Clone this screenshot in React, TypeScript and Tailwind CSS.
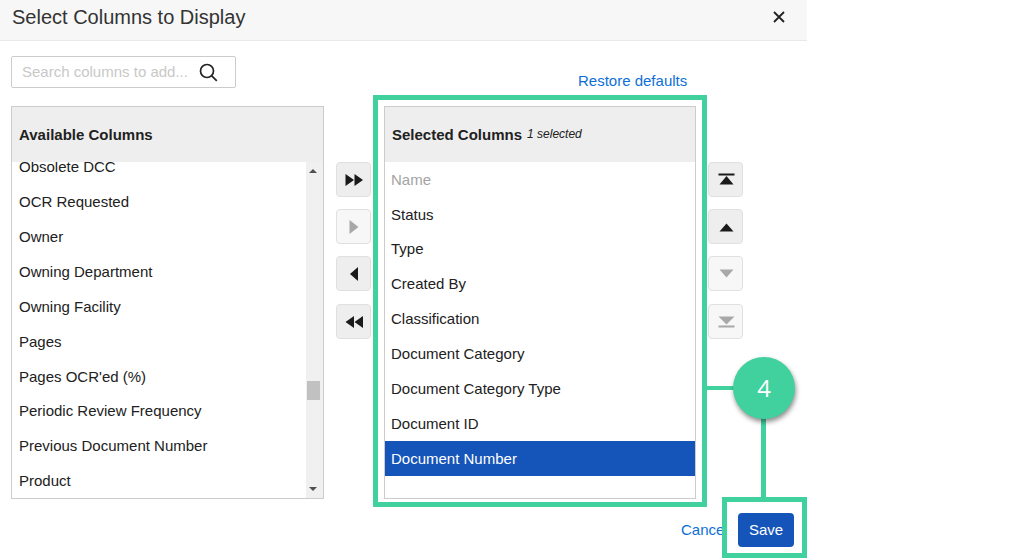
import React from 'react';

const available = [
  'Obsolete DCC',
  'OCR Requested',
  'Owner',
  'Owning Department',
  'Owning Facility',
  'Pages',
  "Pages OCR'ed (%)",
  'Periodic Review Frequency',
  'Previous Document Number',
  'Product',
];

const selected = [
  'Name',
  'Status',
  'Type',
  'Created By',
  'Classification',
  'Document Category',
  'Document Category Type',
  'Document ID',
  'Document Number',
];

const icons: Record<string, React.ReactNode> = {
  allRight: <path d="M0.500 1l8.500 6-8.500 6zM9.500 1l8.500 6-8.500 6z" />,
  right: <path d="M4.500 0l9 7-9 7z" />,
  left: <path d="M13 0L5 7l8 7z" />,
  allLeft: <path d="M9 1L0.500 7 9 13zM18 1L9.500 7l8.500 6z" />,
  top: <path d="M1.500 0.500h16v2h-16zM9.500 3l7 8.500h-14z" />,
  up: <path d="M9.500 3.500l7 8h-14z" />,
  down: <path d="M2.500 2.500h14l-7 8z" />,
  bottom: <path d="M1.500 1.500h16l-8 8zM1.500 10.500h16v2h-16z" />,
};

const MoveButton = ({ icon, disabled, className = '' }: { icon: string; disabled?: boolean; className?: string }) => (
  <button
    className={`flex h-[35px] w-[35px] items-center justify-center rounded border border-[#e0e0e0] ${
      disabled ? 'bg-[#f7f7f7] text-[#a8a8a8]' : 'bg-[#eeeeee] text-[#1a1a1a]'
    } ${className}`}
  >
    <svg width="18" height="14" viewBox="0 0 18 14" fill="currentColor">
      {icons[icon]}
    </svg>
  </button>
);

export default function App() {
  return (
    <div className="relative h-[558px] w-[1012px] overflow-hidden bg-white font-['Liberation_Sans',Arial,sans-serif] text-[15px] text-[#212121]">
      <div className="flex h-full w-[807px] flex-col">
        {/* Header */}
        <div className="flex h-[41px] shrink-0 items-center justify-between border-b border-[#e8e8e8] bg-[#f7f7f7] pb-[6px] pl-[12px] pr-[21px]">
          <h2 className="text-[20px] leading-none text-[#333333]">Select Columns to Display</h2>
          <svg width="14" height="14" viewBox="0 0 14 14" stroke="#222222" strokeWidth="1.800" fill="none">
            <path d="M2 2l10 10M12 2L2 12" />
          </svg>
        </div>

        {/* Search + restore */}
        <div className="flex h-[65px] shrink-0 pl-[11px] pt-[15px]">
          <div className="flex h-[32px] w-[225px] items-center justify-between rounded-[2px] border border-[#cccccc] pl-[10px] pr-[17px]">
            <span className="text-[#c8c8c8]">Search columns to add...</span>
            <svg width="19" height="19" viewBox="0 0 19 19" fill="none" stroke="#222222" strokeWidth="1.700">
              <circle cx="8" cy="8" r="6.500" />
              <path d="M12.800 12.800l5 5" />
            </svg>
          </div>
          <a className="ml-[342px] mt-[16px] leading-[18px] text-[#0d6fd6]">Restore defaults</a>
        </div>

        {/* Columns */}
        <div className="flex h-[393px] shrink-0 pl-[11px]">
          <div className="flex w-[313px] flex-col border border-[#cccccc]">
            <div className="flex h-[55px] shrink-0 items-center bg-[#eeeeee] pl-[7px] pt-[1px] font-bold">
              Available Columns
            </div>
            <div className="flex min-h-0 flex-1">
              <div className="min-w-0 flex-1 overflow-hidden">
                <div className="mt-[-12px]">
                  {available.map((name) => (
                    <div key={name} className="flex h-[34.900px] items-center pl-[7px]">
                      {name}
                    </div>
                  ))}
                </div>
              </div>
              <div className="relative w-[17px] shrink-0 bg-[#f0f0f0]">
                <div className="absolute left-[3px] top-[7px] h-0 w-0 border-x-[4px] border-b-[4px] border-x-transparent border-b-[#505050]" />
                <div className="absolute left-[1px] top-[219px] h-[19px] w-[13px] bg-[#c1c1c1]" />
                <div className="absolute bottom-[7px] left-[3px] h-0 w-0 border-x-[4px] border-t-[4px] border-x-transparent border-t-[#505050]" />
              </div>
            </div>
          </div>

          <div className="ml-[12px] flex w-[48px] shrink-0 flex-col gap-[12px] pt-[56px]">
            <MoveButton icon="allRight" />
            <MoveButton icon="right" disabled />
            <MoveButton icon="left" />
            <MoveButton icon="allLeft" className="mt-[1px]" />
          </div>

          <div className="flex w-[312px] shrink-0 flex-col border border-[#cccccc]">
            <div className="flex h-[55px] shrink-0 items-center bg-[#eeeeee] pl-[7px]">
              <span className="pt-[1px] font-bold">Selected Columns</span>
              <span className="ml-[5px] pb-[1px] text-[12px] italic">1 selected</span>
            </div>
            <div className="min-h-0 flex-1">
              {selected.map((name, i) => (
                <div
                  key={name}
                  className={`flex h-[34.900px] items-center pl-[6px] pt-[1px] ${
                    i === 0 ? 'text-[#a3a3a3]' : i === 8 ? 'bg-[#1554b8] text-white' : ''
                  }`}
                >
                  {name}
                </div>
              ))}
            </div>
          </div>

          <div className="ml-[12px] flex w-[35px] shrink-0 flex-col gap-[12px] pt-[56px]">
            <MoveButton icon="top" />
            <MoveButton icon="up" />
            <MoveButton icon="down" disabled />
            <MoveButton icon="bottom" disabled className="mt-[1px]" />
          </div>
        </div>

        {/* Footer */}
        <div className="flex flex-1 items-start justify-end pr-[13px] pt-[14px]">
          <a className="mr-[13px] mt-[9px] w-[44px] leading-[16px] text-[#0d6fd6]">Cancel</a>
          <button className="h-[34px] w-[56px] rounded-[4px] bg-[#1554b8] text-white">Save</button>
        </div>
      </div>

      {/* Callout overlay */}
      <div className="absolute left-[373px] top-[95px] h-[412px] w-[334px] border-[5px] border-[#40d19f]" />
      <div className="absolute left-[707px] top-[386px] h-[4px] w-[28px] bg-[#40d19f]" />
      <div className="absolute left-[761px] top-[418px] h-[80px] w-[5px] bg-[#40d19f]" />
      <div className="absolute left-[722px] top-[497px] h-[61px] w-[85px] border-[5px] border-[#40d19f]" />
      <div className="absolute left-[733px] top-[357px] flex h-[62px] w-[62px] items-center justify-center rounded-full bg-[#40d19f] font-['Open_Sans',sans-serif] text-[24px] text-white shadow-[1px_3px_5px_rgba(0,0,0,0.45)]">
        4
      </div>
    </div>
  );
}
